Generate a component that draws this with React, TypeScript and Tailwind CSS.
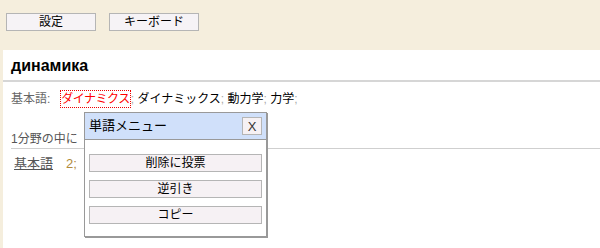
const font = { fontFamily: '"Liberation Sans", "Noto Sans CJK JP", sans-serif' }

const TopButton = ({ label }: { label: string }) => (
  <button className="w-[90px] h-[18px] border border-[#b5b5b5] bg-[#f6f3f6] text-[12px] leading-none text-black">
    {label}
  </button>
)

const MenuButton = ({ label }: { label: string }) => (
  <button className="w-full h-[18px] border border-[#b5b5b5] bg-[#f6f1f4] text-[12px] leading-none text-black">
    {label}
  </button>
)

export default function App() {
  return (
    <div className="relative w-[600px] h-[248px] overflow-hidden bg-[#f5eedd]" style={font}>
      <div className="h-[50px] flex gap-[13px] pl-[6px] pt-[13px]">
        <TopButton label="設定" />
        <TopButton label="キーボード" />
      </div>

      <div className="ml-[3px] bg-white h-[198px]">
        <h1 className="h-[30px] pl-[8px] pt-[7px] text-[16px] font-bold leading-[18px] text-black">динамика</h1>
        <div className="h-[2px] bg-[#d6d6d6]" />
        <p className="pl-[8px] pt-[8px] h-[30px] text-[12px] leading-[16px] text-black">
          <span className="text-[#666]">基本語:</span>
          <span className="inline-block ml-[10px] border border-dotted border-[#e00] text-[#f00] tracking-[-0.5px]">ダイナミクス</span>
          <span className="text-[#aaa]">;</span> ダイナミックス<span className="text-[#aaa]">;</span> 動力学
          <span className="text-[#aaa]">;</span> 力学<span className="text-[#aaa]">;</span>
        </p>
        <p className="pl-[8px] pt-[19px] text-[12px] leading-[16px] text-[#555]">1分野の中に</p>
        <div className="ml-[8px] mt-[1px] h-px bg-[#cfcfcf]" />
        <p className="pl-[11px] pt-[7px] text-[13px] leading-[16px]">
          <span className="underline text-[#555]">基本語</span>
          <span className="ml-[13px] text-[#b08a3a]">2;</span>
        </p>
      </div>

      <div className="absolute left-[84px] top-[112px] w-[183px] h-[125px] bg-white border border-[#999] shadow-[1px_1px_0_#999]">
        <div className="h-[27px] bg-[#d0e0fa] border-b border-[#999] flex items-center justify-between pl-[4px] pr-[4px]">
          <span className="text-[13px] text-black">単語メニュー</span>
          <button className="w-[20px] h-[18px] border border-[#b5b5b5] bg-[#f6f1f4] text-[13px] leading-none text-[#333]">X</button>
        </div>
        <div className="flex flex-col gap-[8px] px-[4px] pt-[14px]">
          <MenuButton label="削除に投票" />
          <MenuButton label="逆引き" />
          <MenuButton label="コピー" />
        </div>
      </div>
    </div>
  )
}
